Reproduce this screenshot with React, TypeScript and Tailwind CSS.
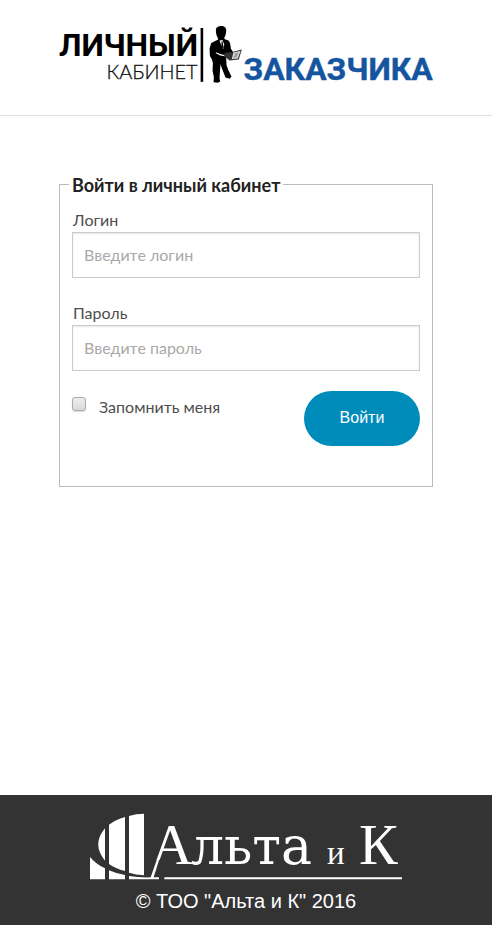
import { useState } from "react";

function CabinetLogo() {
  return (
    <svg viewBox="59 26 375 58" className="block w-full overflow-visible" role="img" aria-label="Личный кабинет заказчика">
      <text x="59" y="56" fontSize="32" fontWeight="700" fill="#000" className="font-['Roboto',sans-serif]">ЛИЧНЫЙ</text>
      <text x="198" y="79" fontSize="20" fontWeight="300" textAnchor="end" fill="#111" stroke="#111" strokeWidth=".3" className="font-['Lato',sans-serif]">КАБИНЕТ</text>
      <rect x="201" y="28" width="2.6" height="54" fill="#000" />
      <g transform="translate(50 15) scale(.3333)">
        <path fill="#000" d="M499 46C499 36 507 33 516 33C526 33 532 40 530 50L528 61L524 69L526 73L537 77C542 81 543 92 544 101L551 112L543 122L532 119L530 128L531 150L536 165L546 185L541 192L528 188L517 160L513 148L511 173L510 190L512 200L505 204L492 202L493 187L489 168L490 145L487 133L481 123L480 101L485 84L506 74L505 69C501 62 499 56 499 46Z" />
        <path fill="#fff" d="M510 77L519 75L524 89L521 103L515 90Z" />
        <path fill="#000" d="M516 79h3l3 18-2 5-4-8z" />
        <path fill="#fff" d="M499 112L512 117L524 120L527 124L512 122L499 115Z" />
        <path fill="#333" d="M525 114L548 111L577 104L568 134L540 137L525 124Z" />
        <path fill="#e5e5e5" d="M552 113L573 108L565 131L547 132Z" />
        <path fill="#999" d="M557 115L568 112L562 127L551 129Z" />
      </g>
      <text x="244" y="80" fontSize="32" fontWeight="700" fill="#15559f" stroke="#15559f" strokeWidth=".4" className="font-['Roboto',sans-serif]">ЗАКАЗЧИКА</text>
    </svg>
  );
}

function CompanyLogo() {
  return (
    <svg viewBox="90 813 312 67" className="block w-[312px] max-w-full" role="img" aria-label="Альта и К" fill="#fff">
      <clipPath id="long-leg">
        <path d="M140 813H402V880H169V860H140Z" />
      </clipPath>
      <g transform="translate(80 790) scale(.3333)">
        <path d="M75 115V212C48 180 48 147 75 115ZM87 104Q107 89 135 81V243Q106 236 87 222ZM147 78Q168 71 192 71V256Q168 254 147 248Z" />
        <path d="M30 201Q48 223 75 235V268H30ZM87 241Q109 251 135 255V268H87ZM147 258Q178 263 212 262L231 208H238L221 262H237V268H147Z" />
        <path d="M253 262H966V268H253Z" />
      </g>
      <text x="151" y="864" fontSize="58" clipPath="url(#long-leg)" className="font-['Liberation_Serif',serif]">А</text>
      <text x="191" y="864" fontSize="52" className="font-['DejaVu_Serif',serif]">льта</text>
      <text x="327" y="864" fontSize="33" className="font-['Liberation_Serif',serif]">и</text>
      <text x="359" y="864" fontSize="58" className="font-['Liberation_Serif',serif]">К</text>
    </svg>
  );
}

const inputClass =
  "mb-[23px] block h-[46px] w-full border border-[#ccc] bg-white px-[11px] text-base text-[#444] shadow-[inset_0_1px_2px_rgba(0,0,0,0.1)] outline-none placeholder:text-[#a9a9a9] focus:border-[#999]";

export default function App() {
  const [remember, setRemember] = useState(false);
  return (
    <div className="flex min-h-screen flex-col bg-white font-['Lato','Noto_Sans',sans-serif] text-[#4d4d4d]">
      <header className="border-b border-[#ddd] px-[12%] pt-[26px] pb-[31px]">
        <CabinetLogo />
      </header>
      <main className="flex-1 px-[12%] pt-[57px] pb-14">
        <form onSubmit={(e) => e.preventDefault()}>
          <fieldset className="border border-[#bbb] px-3 pt-[11px] pb-10">
            <legend className="-ml-[3px] bg-white px-[3px] text-lg/6 font-bold text-[#222]">Войти в личный кабинет</legend>
            <label htmlFor="login" className="block pl-px text-base/6">Логин</label>
            <input id="login" type="text" placeholder="Введите логин" className={inputClass} />
            <label htmlFor="password" className="block pl-px text-base/6">Пароль</label>
            <input id="password" type="password" placeholder="Введите пароль" className={inputClass} />
            <div className="-mt-[3px] flex items-start justify-between">
              <div className="flex items-start gap-3 pt-1">
                <input
                  id="remember"
                  type="checkbox"
                  checked={remember}
                  onChange={(e) => setRemember(e.target.checked)}
                  className="mt-[2px] h-[14px] w-[14px] appearance-none rounded-[3px] border border-[#aaa] bg-linear-to-b from-[#eee] to-[#d9d9d9] shadow-[0_1px_1px_rgba(0,0,0,0.15)] checked:from-[#008cba] checked:to-[#007095]"
                />
                <label htmlFor="remember" className="pl-px text-base/6">Запомнить меня</label>
              </div>
              <button type="submit" className="h-[55px] w-[116px] rounded-full bg-[#008cba] font-['Liberation_Sans',sans-serif] text-base text-white hover:bg-[#007095]">
                Войти
              </button>
            </div>
          </fieldset>
        </form>
      </main>
      <footer className="flex flex-col items-center bg-[#333] px-4 pt-[18px] pb-2 text-white">
        <CompanyLogo />
        <p className="mt-[5px] font-['Liberation_Sans',sans-serif] text-xl/8">© ТОО "Альта и К" 2016</p>
      </footer>
    </div>
  );
}
